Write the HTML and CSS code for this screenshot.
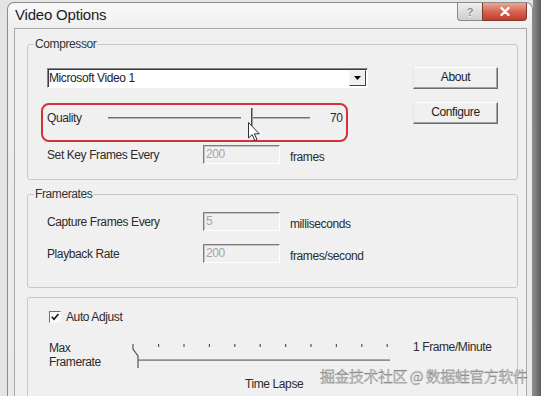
FILE: index.html
```html
<!DOCTYPE html>
<html lang="en">
<head>
  <meta charset="UTF-8">
  <meta name="viewport" content="width=device-width, initial-scale=1.0">
  <title>Video Options</title>
  <link rel="stylesheet" href="styles.css">
</head>
<body>
  <div class="desk">
    <div class="window">
      <div class="titlebar">
        <span class="title">Video Options</span>
        <div class="caption-buttons">
          <span class="cap-btn help">?</span>
          <span class="cap-btn close">
            <svg width="10" height="9" viewBox="0 0 10 9">
              <path d="M1.5 1 L8.5 8 M8.5 1 L1.5 8" stroke="#fff" stroke-width="2.2" stroke-linecap="round"/>
            </svg>
          </span>
        </div>
      </div>

      <div class="client">
        <fieldset class="group">
          <legend>Compressor</legend>
          <div class="compressor-body">
            <div class="compressor-main">
              <div class="select">
                <span class="select-text">Microsoft Video 1</span>
                <span class="select-arrow">
                  <svg width="7" height="4" viewBox="0 0 7 4"><path d="M0 0 H7 L3.5 4 Z" fill="#000"/></svg>
                </span>
              </div>
              <div class="quality-row">
                <span class="quality-label">Quality</span>
                <svg class="quality-slider" width="202" height="22" viewBox="0 0 202 22">
                  <rect x="0" y="11" width="202" height="1" fill="#6f6f6f"/>
                  <rect x="0" y="12" width="202" height="1" fill="#b4b4b4"/>
                  <rect x="133" y="2" width="12" height="18" fill="#f0f0f0"/>
                  <rect x="143" y="2" width="1.5" height="18" fill="#4a4a4a"/>
                </svg>
                <span class="quality-value">70</span>
                <svg class="cursor" width="12" height="20" viewBox="0 0 12 20">
                  <path d="M0.5 0.5 V16 L4.2 12.6 L6.8 18.6 L9 17.6 L6.4 11.8 H11.2 Z" fill="#fff" stroke="#333" stroke-width="1"/>
                </svg>
              </div>
              <div class="field-row key-row">
                <span class="field-label">Set Key Frames Every</span>
                <span class="field-input">200</span>
                <span class="field-unit">frames</span>
              </div>
            </div>
            <div class="compressor-buttons">
              <span class="btn">About</span>
              <span class="btn">Configure</span>
            </div>
          </div>
        </fieldset>

        <fieldset class="group framerates">
          <legend>Framerates</legend>
          <div class="framerates-body">
            <div class="field-row">
              <span class="field-label">Capture Frames Every</span>
              <span class="field-input">5</span>
              <span class="field-unit">milliseconds</span>
            </div>
            <div class="field-row">
              <span class="field-label">Playback Rate</span>
              <span class="field-input">200</span>
              <span class="field-unit">frames/second</span>
            </div>
          </div>
        </fieldset>

        <div class="group plain">
          <div class="check-row">
            <span class="checkbox">
              <svg width="10" height="10" viewBox="0 0 10 10"><path d="M1.8 4.8 L4 7.2 L8.4 2" fill="none" stroke="#111" stroke-width="1.6"/></svg>
            </span>
            <span>Auto Adjust</span>
          </div>
          <div class="rate-row">
            <span class="rate-label">Max<br>Framerate</span>
            <svg class="rate-slider" width="262" height="30" viewBox="0 0 262 30">
              <g fill="#555">
                <rect x="28" y="3" width="1.2" height="3"/>
                <rect x="53.4" y="3" width="1.2" height="3"/>
                <rect x="78.8" y="3" width="1.2" height="3"/>
                <rect x="104.2" y="3" width="1.2" height="3"/>
                <rect x="129.6" y="3" width="1.2" height="3"/>
                <rect x="155" y="3" width="1.2" height="3"/>
                <rect x="180.4" y="3" width="1.2" height="3"/>
                <rect x="205.8" y="3" width="1.2" height="3"/>
                <rect x="231.2" y="3" width="1.2" height="3"/>
                <rect x="256.6" y="3" width="1.2" height="3"/>
              </g>
              <path d="M3 3 V8 L8 15 V27" fill="none" stroke="#555" stroke-width="1.2"/>
              <rect x="8" y="18.5" width="252" height="1.2" fill="#666"/>
            </svg>
            <span class="rate-max">1 Frame/Minute</span>
          </div>
          <div class="rate-caption">Time Lapse</div>
        </div>
      </div>
    </div>
    <div class="desk-edge"></div>
  </div>

  <div class="watermark">掘金技术社区 @ 数据蛙官方软件</div>
</body>
</html>
```

FILE: styles.css
```css
html, body {
  height: 396px;
  overflow: hidden;
}
body {
  margin: 0;
  background: #e4e4e4;
  font-family: 'Liberation Sans', Arial, sans-serif;
  font-size: 12px;
  letter-spacing: -0.4px;
  color: #2b2b2b;
}
.desk {
  display: flex;
  height: 396px;
}
.desk-edge {
  flex: 1;
  background: linear-gradient(90deg, #8c8c8c, #5f5f5f);
}
.window {
  box-sizing: border-box;
  width: 526px;
  height: 440px;
  margin: 2px 0 0 7px;
  padding: 0 5px 0 6px;
  border: 1px solid #8c8c8c;
  border-bottom: none;
  border-radius: 7px 7px 0 0;
  background: linear-gradient(#f9f9f9, #eeeeee 26px, #e9e9e9);
}
.titlebar {
  display: flex;
  justify-content: space-between;
  align-items: flex-start;
  height: 25px;
}
.title {
  margin-left: 1px;
  padding-top: 3px;
  font-size: 15px;
  line-height: 18px;
  letter-spacing: -0.2px;
  color: #1c1c1c;
}
.caption-buttons {
  display: flex;
}
.cap-btn {
  box-sizing: border-box;
  height: 18px;
  display: flex;
  align-items: center;
  justify-content: center;
  border: 1px solid #8a8a8a;
  border-top: none;
}
.help {
  width: 25px;
  border-right: none;
  border-radius: 0 0 0 4px;
  background: linear-gradient(#efefef, #cdcdcd);
  font-size: 11px;
  font-weight: bold;
  color: #8d8d8d;
  text-shadow: 0 1px 0 #fff;
}
.close {
  width: 45px;
  border-color: #7a3b32;
  border-radius: 0 0 4px 0;
  background: linear-gradient(#eaa898, #d4604c 55%, #c23d2b);
}
.client {
  box-sizing: border-box;
  height: 420px;
  padding: 8px 8px 0 12px;
  border: 1px solid #a9a9a9;
  background: #f0f0f0;
}
.group {
  margin: 0;
  padding: 0;
  border: 1px solid #c8c8c8;
  border-radius: 3px;
}
.group legend {
  margin-left: 6px;
  padding: 0 1px;
  line-height: 14px;
  color: #333;
}
.compressor-body {
  display: flex;
  padding: 17px 0 15px 13px;
}
.compressor-main {
  width: 327px;
}
.select {
  box-sizing: border-box;
  display: flex;
  align-items: center;
  justify-content: space-between;
  width: 321px;
  height: 20px;
  margin-left: 6px;
  padding-left: 1px;
  border: 1px solid;
  border-color: #858585 #ffffff #ffffff #858585;
  box-shadow: inset 1px 1px 0 #3c3c3c;
  background: #fff;
  color: #222;
}
.select-arrow {
  box-sizing: border-box;
  display: flex;
  align-items: center;
  justify-content: center;
  width: 17px;
  height: 16px;
  margin-right: 1px;
  border: 1px solid;
  border-color: #f8f8f8 #404040 #404040 #f8f8f8;
  background: #f0f0f0;
}
.quality-row {
  position: relative;
  box-sizing: border-box;
  display: flex;
  align-items: flex-start;
  width: 307px;
  height: 39px;
  margin-top: 15px;
  padding: 6px 0 0 4px;
  border: 2px solid #d6303a;
  border-radius: 8px;
  line-height: 14px;
}
.quality-label {
  flex: 0 0 61px;
}
.quality-slider {
  margin-top: -5px;
}
.quality-value {
  margin-left: 20px;
}
.cursor {
  position: absolute;
  left: 205px;
  top: 17px;
}
.field-row {
  display: flex;
  align-items: center;
  height: 19px;
  line-height: 14px;
}
.key-row {
  margin-top: 3px;
  padding-left: 6px;
}
.field-label {
  flex: 0 0 156px;
}
.field-input {
  box-sizing: border-box;
  width: 77px;
  height: 19px;
  padding: 1px 0 0 2px;
  border: 1px solid;
  border-color: #7c7c7c #ffffff #ffffff #7c7c7c;
  box-shadow: inset 1px 1px 0 #c4c4c4;
  background: #f0f0f0;
  color: #a6a6a6;
  line-height: 15px;
}
.field-unit {
  margin-left: 10px;
  padding-top: 4px;
}
.compressor-buttons {
  display: flex;
  flex-direction: column;
  gap: 13px;
  margin: -1px 0 0 45px;
}
.btn {
  box-sizing: border-box;
  width: 85px;
  height: 22px;
  border: 1px solid;
  border-color: #ffffff #6b6b6b #6b6b6b #e6e6e6;
  box-shadow: inset -1px -1px 0 #a3a3a3;
  background: #f0f0f0;
  text-align: center;
  line-height: 19px;
  color: #222;
}
.framerates {
  margin-top: 7px;
}
.framerates-body {
  display: flex;
  flex-direction: column;
  gap: 13px;
  padding: 11px 0 24px 19px;
}
.plain {
  margin-top: 9px;
  height: 200px;
  padding: 12px 0 0 21px;
  border-bottom: none;
}
.check-row {
  display: flex;
  align-items: center;
  height: 13px;
  line-height: 14px;
}
.checkbox {
  box-sizing: border-box;
  display: flex;
  align-items: center;
  justify-content: center;
  width: 12px;
  height: 12px;
  margin-right: 5px;
  border: 1px solid;
  border-color: #6f6f6f #f8f8f8 #f8f8f8 #6f6f6f;
  background: #fafafa;
}
.rate-row {
  display: flex;
  align-items: flex-start;
  margin-top: 18px;
  line-height: 14px;
}
.rate-label {
  flex: 0 0 81px;
}
.rate-max {
  margin: -1px 0 0 21px;
}
.rate-caption {
  margin-top: 6px;
  padding-left: 196px;
  line-height: 14px;
}
.watermark {
  position: absolute;
  left: 320px;
  top: 368px;
  font-family: 'Noto Sans CJK SC', sans-serif;
  font-size: 15px;
  font-weight: 300;
  line-height: 16px;
  letter-spacing: -0.5px;
  color: #fbfbfb;
  -webkit-text-stroke: 0.35px #7a7a7a;
  text-shadow: 0 0 1px #8a8a8a;
}
```
